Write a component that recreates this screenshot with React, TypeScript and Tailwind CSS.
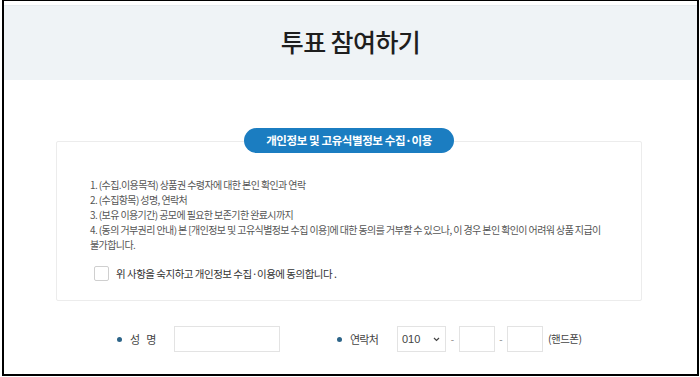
import React from "react";

const KR = { fontFamily: '"Noto Sans CJK KR", "Noto Sans", sans-serif' };
const LAT = { fontFamily: '"Liberation Sans", "Noto Sans CJK KR", sans-serif' };

export default function App() {
  return (
    <div className="w-[700px] h-[377px] bg-white overflow-hidden" style={KR}>
      <div className="ml-[2px] w-[697px] h-[376px] border-l-2 border-r-2 border-t border-b-2 border-black flex flex-col">
        <div className="h-[5px] bg-white border-b border-[#e6ebef] shrink-0" />
        <div className="h-[74px] bg-[#eff3f6] flex items-center justify-center shrink-0">
          <h1 className="text-[25px] font-medium text-[#1e1e1e] tracking-[-0.6px] leading-none -mt-[3px]">
            투표 참여하기
          </h1>
        </div>
        <div className="h-[61px] shrink-0" />
        <div className="relative mx-[52px] w-[586px] h-[160px] border border-[#ececec] rounded-[2px] shrink-0">
          <div className="absolute left-1/2 -translate-x-1/2 -top-[14px] w-[210px] h-[25px] rounded-full bg-[#1b7dc1] flex items-center justify-center">
            <span className="text-white text-[11.5px] font-bold tracking-[-0.4px]">
              개인정보 및 고유식별정보 수집·이용
            </span>
          </div>
          <div className="pl-[33px] pt-[35px] text-[10px] leading-[15px] text-[#555] tracking-[-0.6px]">
            <p>1. (수집.이용목적) 상품권 수령자에 대한 본인 확인과 연락</p>
            <p>2. (수집항목) 성명, 연락처</p>
            <p>3. (보유 이용기간) 공모에 필요한 보존기한 완료시까지</p>
            <p>
              4. (동의 거부권리 안내) 본 [개인정보 및 고유식별정보 수집 이용]에 대한 동의를 거부할 수 있으나, 이 경우 본인 확인이 어려워 상품 지급이
              <br />
              불가합니다.
            </p>
          </div>
          <div className="flex items-center pl-[37px] mt-[14px]">
            <div className="w-[15px] h-[15px] border border-[#cfcfcf] rounded-[2px] bg-white" />
            <span className="ml-[7px] text-[10.5px] text-[#333] tracking-[-0.5px]">
              위 사항을 숙지하고 개인정보 수집·이용에 동의합니다 .
            </span>
          </div>
        </div>
        <div className="flex items-center mt-[25px] h-[26px] pl-[113px]">
          <span className="w-[5px] h-[5px] rounded-full bg-[#2c6488]" />
          <span className="ml-[8px] text-[11px] text-[#444] tracking-[-0.3px] w-[44px]">
            성&nbsp;&nbsp;&nbsp;명
          </span>
          <div className="w-[106px] h-[26px] border border-[#e3e3e3] bg-white" />
          <span className="ml-[57px] w-[5px] h-[5px] rounded-full bg-[#2c6488]" />
          <span className="ml-[8px] text-[11px] text-[#444] tracking-[-0.8px] w-[47px]">연락처</span>
          <div className="w-[49px] h-[26px] border border-[#e3e3e3] bg-white flex items-center justify-between pl-[4px] pr-[5px]">
            <span className="text-[11px] text-[#444]" style={LAT}>010</span>
            <svg width="7" height="5" viewBox="0 0 7 5" className="mt-[1px]">
              <path d="M1 1 L3.5 3.5 L6 1" fill="none" stroke="#444" strokeWidth="1.2" />
            </svg>
          </div>
          <span className="w-[13px] text-center text-[10px] text-[#999]" style={LAT}>-</span>
          <div className="w-[36px] h-[26px] border border-[#e3e3e3] bg-white" />
          <span className="w-[12px] text-center text-[10px] text-[#999]" style={LAT}>-</span>
          <div className="w-[36px] h-[26px] border border-[#e3e3e3] bg-white" />
          <span className="ml-[5px] text-[10.5px] text-[#444] tracking-[-0.5px]">(핸드폰)</span>
        </div>
      </div>
    </div>
  );
}
